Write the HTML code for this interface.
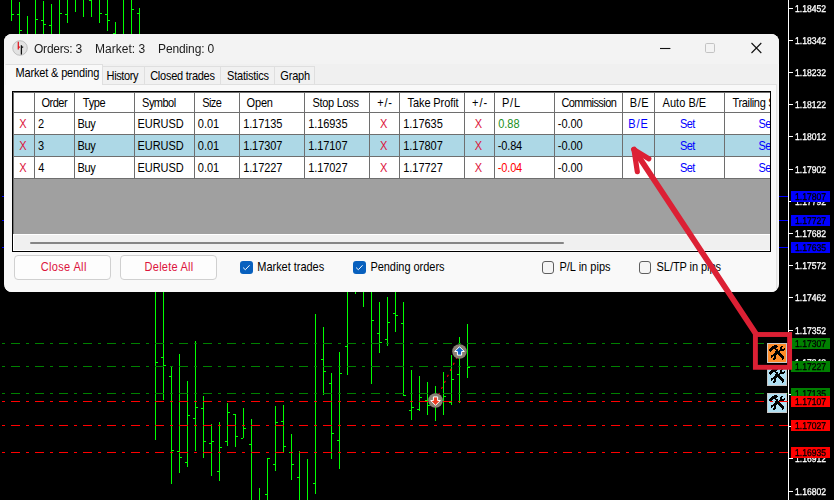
<!DOCTYPE html>
<html lang="en"><head><meta charset="utf-8"><title>Orders</title>
<style>
html,body{margin:0;padding:0;background:#000}
body{width:834px;height:500px;overflow:hidden;position:relative;font-family:"Liberation Sans",sans-serif}
.chart{position:absolute;left:0;top:0;display:block;will-change:transform}
.ax{text-rendering:geometricPrecision;font-family:"Liberation Sans",sans-serif;font-size:9.8px;stroke-width:0.3px}
.anno{position:absolute;left:0;top:0;pointer-events:none}
#dlg{position:absolute;left:4px;top:34px;width:775px;height:257.5px;background:#f0f0f0;border-radius:8px;overflow:hidden;box-shadow:inset 0 0 0 1px rgba(255,255,255,.55)}
#tbar{position:absolute;left:0;top:0;width:775px;height:30px;background:#f3f3f3}
#page{position:absolute;left:1px;top:50px;width:771px;height:208px;background:#f9f9f9;border-right:1px solid #e2e2e2;border-top:1px solid #e0e0e0}
.tab{position:absolute;top:32px;height:17px;background:#f1f1f1;border:1px solid #dfdfdf;border-bottom:none;box-sizing:content-box}
.tab.on{top:30px;height:20px;background:#f9f9f9;border-left-color:#f4f4f4}
#grid{position:absolute;left:8px;top:57px;width:757px;height:159px;border:1px solid #000;background:#a0a0a0;overflow:hidden}
#grid .in{position:absolute;left:0;top:0;right:0;bottom:0;border-left:1px solid #6e6e6e;border-top:1px solid #6e6e6e}
.hc{position:absolute;top:1px;height:19px;background:#fff}
.c{position:absolute;height:21px;background:#fff}
.row.sel .c{background:#add8e6}
.t{position:absolute;white-space:pre;font-size:12px;line-height:14px;font-family:"Liberation Sans",sans-serif}
.t.s{font-size:11px;transform:scaleY(1.125);transform-origin:0 11px}
.t.g{will-change:transform}
.vl{position:absolute;top:1px;width:1px;height:86px;background:#6e6e6e}
.hl{position:absolute;left:1px;width:757px;height:1px;background:#6e6e6e}
#sb{position:absolute;left:0;right:0;top:142px;height:17px;background:#f0f0f0;border:1px solid #fff;border-right:none;box-sizing:border-box}
#thumb{position:absolute;left:16px;top:7px;width:534px;height:2px;background:#858585;border-radius:1px}
.btn{position:absolute;top:221px;height:23px;width:95px;border:1px solid #d0d0d0;border-radius:4px;background:#fdfdfd}
.chk{position:absolute;top:224px;height:20px;width:120px}
.cb{position:absolute;left:0;top:3px;width:12.6px;height:12.6px;border-radius:3px;box-sizing:border-box}
.cb.on{background:#0860be}
.cb.off{background:#f5f5f5;border:1px solid #5f5f5f}
</style></head>
<body>
<svg class="chart" width="834" height="500" viewBox="0 0 834 500">
<rect width="834" height="500" fill="#000"/>
<g fill="#00ff00" shape-rendering="crispEdges"><rect x="11" y="0" width="1" height="21"/><rect x="12" y="14" width="2" height="1"/><rect x="19" y="2" width="1" height="38"/><rect x="17" y="14" width="2" height="1"/><rect x="20" y="30" width="2" height="1"/><rect x="27" y="16" width="1" height="24"/><rect x="35" y="0" width="1" height="40"/><rect x="36" y="19" width="2" height="1"/><rect x="43" y="1" width="1" height="39"/><rect x="41" y="20" width="2" height="1"/><rect x="44" y="24" width="2" height="1"/><rect x="51" y="4" width="1" height="36"/><rect x="49" y="25" width="2" height="1"/><rect x="59" y="0" width="1" height="40"/><rect x="60" y="13" width="2" height="1"/><rect x="67" y="0" width="1" height="23"/><rect x="65" y="14" width="2" height="1"/><rect x="75" y="0" width="1" height="12"/><rect x="83" y="0" width="1" height="17"/><rect x="91" y="0" width="1" height="17"/><rect x="89" y="0" width="2" height="1"/><rect x="99" y="0" width="1" height="23"/><rect x="100" y="13" width="2" height="1"/><rect x="107" y="0" width="1" height="31"/><rect x="105" y="14" width="2" height="1"/><rect x="108" y="20" width="2" height="1"/><rect x="115" y="22" width="1" height="18"/><rect x="113" y="33" width="2" height="1"/><rect x="123" y="0" width="1" height="40"/><rect x="131" y="0" width="1" height="40"/><rect x="132" y="9" width="2" height="1"/><rect x="139" y="8" width="1" height="32"/><rect x="137" y="13" width="2" height="1"/><rect x="155" y="280" width="1" height="160"/><rect x="156" y="362" width="2" height="1"/><rect x="163" y="280" width="1" height="120"/><rect x="161" y="357" width="2" height="1"/><rect x="164" y="365" width="2" height="1"/><rect x="171" y="366" width="1" height="118"/><rect x="169" y="376" width="2" height="1"/><rect x="172" y="450" width="2" height="1"/><rect x="179" y="354" width="1" height="119"/><rect x="177" y="451" width="2" height="1"/><rect x="180" y="457" width="2" height="1"/><rect x="187" y="381" width="1" height="86"/><rect x="185" y="462" width="2" height="1"/><rect x="188" y="415" width="2" height="1"/><rect x="195" y="341" width="1" height="110"/><rect x="193" y="418" width="2" height="1"/><rect x="196" y="407" width="2" height="1"/><rect x="203" y="396" width="1" height="62"/><rect x="201" y="408" width="2" height="1"/><rect x="204" y="441" width="2" height="1"/><rect x="211" y="424" width="1" height="52"/><rect x="209" y="443" width="2" height="1"/><rect x="212" y="441" width="2" height="1"/><rect x="219" y="422" width="1" height="59"/><rect x="217" y="471" width="2" height="1"/><rect x="220" y="447" width="2" height="1"/><rect x="227" y="403" width="1" height="43"/><rect x="225" y="441" width="2" height="1"/><rect x="228" y="412" width="2" height="1"/><rect x="235" y="414" width="1" height="33"/><rect x="233" y="414" width="2" height="1"/><rect x="236" y="436" width="2" height="1"/><rect x="243" y="408" width="1" height="30"/><rect x="241" y="438" width="2" height="1"/><rect x="244" y="428" width="2" height="1"/><rect x="251" y="419" width="1" height="81"/><rect x="249" y="444" width="2" height="1"/><rect x="259" y="488" width="1" height="12"/><rect x="267" y="458" width="1" height="42"/><rect x="265" y="494" width="2" height="1"/><rect x="268" y="458" width="2" height="1"/><rect x="275" y="406" width="1" height="65"/><rect x="273" y="464" width="2" height="1"/><rect x="276" y="422" width="2" height="1"/><rect x="283" y="405" width="1" height="47"/><rect x="281" y="421" width="2" height="1"/><rect x="284" y="446" width="2" height="1"/><rect x="291" y="434" width="1" height="46"/><rect x="289" y="452" width="2" height="1"/><rect x="292" y="464" width="2" height="1"/><rect x="299" y="451" width="1" height="49"/><rect x="297" y="477" width="2" height="1"/><rect x="307" y="459" width="1" height="41"/><rect x="315" y="314" width="1" height="180"/><rect x="313" y="483" width="2" height="1"/><rect x="323" y="327" width="1" height="68"/><rect x="321" y="359" width="2" height="1"/><rect x="324" y="371" width="2" height="1"/><rect x="331" y="373" width="1" height="86"/><rect x="329" y="383" width="2" height="1"/><rect x="332" y="433" width="2" height="1"/><rect x="339" y="352" width="1" height="117"/><rect x="337" y="440" width="2" height="1"/><rect x="340" y="373" width="2" height="1"/><rect x="347" y="280" width="1" height="95"/><rect x="345" y="346" width="2" height="1"/><rect x="355" y="280" width="1" height="14"/><rect x="363" y="280" width="1" height="27"/><rect x="371" y="280" width="1" height="104"/><rect x="372" y="320" width="2" height="1"/><rect x="379" y="302" width="1" height="51"/><rect x="377" y="333" width="2" height="1"/><rect x="380" y="342" width="2" height="1"/><rect x="387" y="297" width="1" height="49"/><rect x="385" y="339" width="2" height="1"/><rect x="388" y="322" width="2" height="1"/><rect x="395" y="280" width="1" height="52"/><rect x="393" y="313" width="2" height="1"/><rect x="396" y="315" width="2" height="1"/><rect x="403" y="302" width="1" height="94"/><rect x="401" y="323" width="2" height="1"/><rect x="404" y="395" width="2" height="1"/><rect x="411" y="370" width="1" height="50"/><rect x="409" y="410" width="2" height="1"/><rect x="412" y="407" width="2" height="1"/><rect x="419" y="376" width="1" height="35"/><rect x="417" y="409" width="2" height="1"/><rect x="420" y="397" width="2" height="1"/><rect x="427" y="382" width="1" height="33"/><rect x="425" y="400" width="2" height="1"/><rect x="428" y="405" width="2" height="1"/><rect x="435" y="386" width="1" height="35"/><rect x="443" y="372" width="1" height="43"/><rect x="444" y="396" width="2" height="1"/><rect x="451" y="355" width="1" height="50"/><rect x="449" y="402" width="2" height="1"/><rect x="452" y="379" width="2" height="1"/><rect x="459" y="337" width="1" height="66"/><rect x="457" y="374" width="2" height="1"/><rect x="467" y="324" width="1" height="54"/><rect x="468" y="367" width="2" height="1"/></g>
<line x1="0" y1="196.5" x2="789" y2="196.5" stroke="#0000ff" stroke-width="1" stroke-dasharray="9 6 3 6" stroke-dashoffset="13" shape-rendering="crispEdges"/><line x1="0" y1="220.5" x2="789" y2="220.5" stroke="#0000ff" stroke-width="1" stroke-dasharray="9 6 3 6" stroke-dashoffset="13" shape-rendering="crispEdges"/><line x1="0" y1="247.5" x2="789" y2="247.5" stroke="#0000ff" stroke-width="1" stroke-dasharray="9 6 3 6" stroke-dashoffset="13" shape-rendering="crispEdges"/>
<line x1="0" y1="343.5" x2="789" y2="343.5" stroke="#008000" stroke-width="1" stroke-dasharray="9 6 3 6" stroke-dashoffset="13" shape-rendering="crispEdges"/><line x1="0" y1="366.5" x2="789" y2="366.5" stroke="#008000" stroke-width="1" stroke-dasharray="9 6 3 6" stroke-dashoffset="13" shape-rendering="crispEdges"/><line x1="0" y1="393.5" x2="789" y2="393.5" stroke="#008000" stroke-width="1" stroke-dasharray="9 6 3 6" stroke-dashoffset="13" shape-rendering="crispEdges"/>
<line x1="436" y1="400" x2="459.5" y2="352" stroke="#ff0000" stroke-width="1.1" stroke-dasharray="2.2 4.5" stroke-dashoffset="1"/>
<g transform="translate(767,343)" shape-rendering="crispEdges"><rect x="0" y="0" width="20" height="20" fill="#c8c8c8"/><rect x="1" y="1" width="18" height="18" fill="#ff8c28"/><path d="M7 2h3v1h-3zM5 3h6v1h-6zM14 3h2v1h-2zM4 4h6v1h-6zM13 4h2v1h-2zM3 5h6v1h-6zM13 5h2v1h-2zM17 5h1v1h-1zM2 6h4v1h-4zM8 6h3v1h-3zM13 6h5v1h-5zM2 7h3v1h-3zM9 7h2v1h-2zM12 7h5v1h-5zM3 8h1v1h-1zM8 8h5v1h-5zM8 9h5v1h-5zM7 10h7v1h-7zM6 11h4v1h-4zM11 11h4v1h-4zM4 12h5v1h-5zM12 12h4v1h-4zM4 13h2v1h-2zM7 13h2v1h-2zM13 13h4v1h-4zM4 14h1v1h-1zM7 14h2v1h-2zM14 14h3v1h-3zM6 15h3v1h-3zM15 15h2v1h-2zM6 16h2v1h-2zM15 16h1v1h-1z" fill="#000"/></g><g transform="translate(767,366)" shape-rendering="crispEdges"><rect x="0" y="0" width="20" height="20" fill="#c8c8c8"/><rect x="1" y="1" width="18" height="18" fill="#b0dff2"/><path d="M7 2h3v1h-3zM5 3h6v1h-6zM14 3h2v1h-2zM4 4h6v1h-6zM13 4h2v1h-2zM3 5h6v1h-6zM13 5h2v1h-2zM17 5h1v1h-1zM2 6h4v1h-4zM8 6h3v1h-3zM13 6h5v1h-5zM2 7h3v1h-3zM9 7h2v1h-2zM12 7h5v1h-5zM3 8h1v1h-1zM8 8h5v1h-5zM8 9h5v1h-5zM7 10h7v1h-7zM6 11h4v1h-4zM11 11h4v1h-4zM4 12h5v1h-5zM12 12h4v1h-4zM4 13h2v1h-2zM7 13h2v1h-2zM13 13h4v1h-4zM4 14h1v1h-1zM7 14h2v1h-2zM14 14h3v1h-3zM6 15h3v1h-3zM15 15h2v1h-2zM6 16h2v1h-2zM15 16h1v1h-1z" fill="#000"/></g><g transform="translate(767,393)" shape-rendering="crispEdges"><rect x="0" y="0" width="20" height="20" fill="#c8c8c8"/><rect x="1" y="1" width="18" height="18" fill="#b0dff2"/><path d="M7 2h3v1h-3zM5 3h6v1h-6zM14 3h2v1h-2zM4 4h6v1h-6zM13 4h2v1h-2zM3 5h6v1h-6zM13 5h2v1h-2zM17 5h1v1h-1zM2 6h4v1h-4zM8 6h3v1h-3zM13 6h5v1h-5zM2 7h3v1h-3zM9 7h2v1h-2zM12 7h5v1h-5zM3 8h1v1h-1zM8 8h5v1h-5zM8 9h5v1h-5zM7 10h7v1h-7zM6 11h4v1h-4zM11 11h4v1h-4zM4 12h5v1h-5zM12 12h4v1h-4zM4 13h2v1h-2zM7 13h2v1h-2zM13 13h4v1h-4zM4 14h1v1h-1zM7 14h2v1h-2zM14 14h3v1h-3zM6 15h3v1h-3zM15 15h2v1h-2zM6 16h2v1h-2zM15 16h1v1h-1z" fill="#000"/></g>
<line x1="0" y1="401.5" x2="789" y2="401.5" stroke="#ff0000" stroke-width="1" stroke-dasharray="9 6 3 6" stroke-dashoffset="13" shape-rendering="crispEdges"/><line x1="0" y1="425.5" x2="789" y2="425.5" stroke="#ff0000" stroke-width="1" stroke-dasharray="9 6 3 6" stroke-dashoffset="13" shape-rendering="crispEdges"/><line x1="0" y1="452.5" x2="789" y2="452.5" stroke="#ff0000" stroke-width="1" stroke-dasharray="9 6 3 6" stroke-dashoffset="13" shape-rendering="crispEdges"/>
<g transform="translate(459.5,351.5)"><circle r="7.3" fill="#8a7f74"/><path d="M0 -4.8 L4.8 0 L2.1 0 L2.1 3.6 L-2.1 3.6 L-2.1 0 L-4.8 0 Z" fill="#1464c8" stroke="#fff" stroke-width="1" stroke-linejoin="miter"/></g><g transform="translate(435.5,400.5)"><circle r="7.3" fill="#8a7f74"/><path d="M0 -4.8 L4.8 0 L2.1 0 L2.1 3.6 L-2.1 3.6 L-2.1 0 L-4.8 0 Z" transform="scale(1,-1)" fill="#f03a1e" stroke="#fff" stroke-width="1" stroke-linejoin="miter"/></g>
<rect x="788" y="0" width="1" height="500" fill="#fff" shape-rendering="crispEdges"/><rect x="789" y="8" width="4" height="1" fill="#fff" shape-rendering="crispEdges"/><text x="795" y="12" fill="#fff" stroke="#fff" class="ax" textLength="31" lengthAdjust="spacingAndGlyphs">1.18452</text><rect x="789" y="40" width="4" height="1" fill="#fff" shape-rendering="crispEdges"/><text x="795" y="44" fill="#fff" stroke="#fff" class="ax" textLength="31" lengthAdjust="spacingAndGlyphs">1.18342</text><rect x="789" y="72" width="4" height="1" fill="#fff" shape-rendering="crispEdges"/><text x="795" y="76" fill="#fff" stroke="#fff" class="ax" textLength="31" lengthAdjust="spacingAndGlyphs">1.18232</text><rect x="789" y="104" width="4" height="1" fill="#fff" shape-rendering="crispEdges"/><text x="795" y="108" fill="#fff" stroke="#fff" class="ax" textLength="31" lengthAdjust="spacingAndGlyphs">1.18122</text><rect x="789" y="136" width="4" height="1" fill="#fff" shape-rendering="crispEdges"/><text x="795" y="140" fill="#fff" stroke="#fff" class="ax" textLength="31" lengthAdjust="spacingAndGlyphs">1.18012</text><rect x="789" y="169" width="4" height="1" fill="#fff" shape-rendering="crispEdges"/><text x="795" y="173" fill="#fff" stroke="#fff" class="ax" textLength="31" lengthAdjust="spacingAndGlyphs">1.17902</text><rect x="789" y="201" width="4" height="1" fill="#fff" shape-rendering="crispEdges"/><text x="795" y="205" fill="#fff" stroke="#fff" class="ax" textLength="31" lengthAdjust="spacingAndGlyphs">1.17792</text><rect x="789" y="233" width="4" height="1" fill="#fff" shape-rendering="crispEdges"/><text x="795" y="237" fill="#fff" stroke="#fff" class="ax" textLength="31" lengthAdjust="spacingAndGlyphs">1.17682</text><rect x="789" y="265" width="4" height="1" fill="#fff" shape-rendering="crispEdges"/><text x="795" y="269" fill="#fff" stroke="#fff" class="ax" textLength="31" lengthAdjust="spacingAndGlyphs">1.17572</text><rect x="789" y="297" width="4" height="1" fill="#fff" shape-rendering="crispEdges"/><text x="795" y="301" fill="#fff" stroke="#fff" class="ax" textLength="31" lengthAdjust="spacingAndGlyphs">1.17462</text><rect x="789" y="330" width="4" height="1" fill="#fff" shape-rendering="crispEdges"/><text x="795" y="334" fill="#fff" stroke="#fff" class="ax" textLength="31" lengthAdjust="spacingAndGlyphs">1.17352</text><rect x="789" y="362" width="4" height="1" fill="#fff" shape-rendering="crispEdges"/><text x="795" y="366" fill="#fff" stroke="#fff" class="ax" textLength="31" lengthAdjust="spacingAndGlyphs">1.17242</text><rect x="789" y="394" width="4" height="1" fill="#fff" shape-rendering="crispEdges"/><text x="795" y="398" fill="#fff" stroke="#fff" class="ax" textLength="31" lengthAdjust="spacingAndGlyphs">1.17132</text><rect x="789" y="426" width="4" height="1" fill="#fff" shape-rendering="crispEdges"/><text x="795" y="430" fill="#fff" stroke="#fff" class="ax" textLength="31" lengthAdjust="spacingAndGlyphs">1.17022</text><rect x="789" y="458" width="4" height="1" fill="#fff" shape-rendering="crispEdges"/><text x="795" y="462" fill="#fff" stroke="#fff" class="ax" textLength="31" lengthAdjust="spacingAndGlyphs">1.16912</text><rect x="789" y="491" width="4" height="1" fill="#fff" shape-rendering="crispEdges"/><text x="795" y="495" fill="#fff" stroke="#fff" class="ax" textLength="31" lengthAdjust="spacingAndGlyphs">1.16802</text>
<rect x="791" y="191" width="39" height="11" fill="#0000ff" shape-rendering="crispEdges"/><text x="795" y="200" fill="#000" stroke="#000" class="ax" textLength="31" lengthAdjust="spacingAndGlyphs">1.17807</text><rect x="791" y="215" width="39" height="11" fill="#0000ff" shape-rendering="crispEdges"/><text x="795" y="224" fill="#000" stroke="#000" class="ax" textLength="31" lengthAdjust="spacingAndGlyphs">1.17727</text><rect x="791" y="242" width="39" height="11" fill="#0000ff" shape-rendering="crispEdges"/><text x="795" y="251" fill="#000" stroke="#000" class="ax" textLength="31" lengthAdjust="spacingAndGlyphs">1.17635</text>
<rect x="791" y="338" width="39" height="11" fill="#008000" shape-rendering="crispEdges"/><text x="795" y="347" fill="#000" stroke="#000" class="ax" textLength="31" lengthAdjust="spacingAndGlyphs">1.17307</text><rect x="791" y="361" width="39" height="11" fill="#008000" shape-rendering="crispEdges"/><text x="795" y="370" fill="#000" stroke="#000" class="ax" textLength="31" lengthAdjust="spacingAndGlyphs">1.17227</text><rect x="791" y="388" width="39" height="11" fill="#008000" shape-rendering="crispEdges"/><text x="795" y="397" fill="#000" stroke="#000" class="ax" textLength="31" lengthAdjust="spacingAndGlyphs">1.17135</text>
<rect x="791" y="396" width="39" height="11" fill="#ff0000" shape-rendering="crispEdges"/><text x="795" y="405" fill="#000" stroke="#000" class="ax" textLength="31" lengthAdjust="spacingAndGlyphs">1.17107</text><rect x="791" y="420" width="39" height="11" fill="#ff0000" shape-rendering="crispEdges"/><text x="795" y="429" fill="#000" stroke="#000" class="ax" textLength="31" lengthAdjust="spacingAndGlyphs">1.17027</text><rect x="791" y="447" width="39" height="11" fill="#ff0000" shape-rendering="crispEdges"/><text x="795" y="456" fill="#000" stroke="#000" class="ax" textLength="31" lengthAdjust="spacingAndGlyphs">1.16935</text>
</svg>
<div id="dlg">
<div id="tbar">
<svg style="position:absolute;left:8px;top:6px" width="17" height="17" viewBox="0 0 17 17"><circle cx="8" cy="8" r="7.3" fill="#e2e2e2" stroke="#b4b4b4" stroke-width="0.8"/><path d="M6.3 1.8 V9.4 M6.3 7.2 H8" stroke="#e01b24" stroke-width="1.3" fill="none"/><path d="M9.4 5.2 V14.4 M9.4 7.2 H11.2" stroke="#111" stroke-width="1.3" fill="none"/></svg>
<span class="t g" style="left:30.20px;top:8px;color:#1b1b1b;letter-spacing:-0.225px">Orders: 3</span><span class="t g" style="left:91.10px;top:8px;color:#1b1b1b;letter-spacing:0.013px">Market: 3</span><span class="t g" style="left:153.90px;top:8px;color:#1b1b1b;letter-spacing:-0.122px">Pending: 0</span>
<svg style="position:absolute;left:650px;top:5px" width="120" height="20" viewBox="0 0 120 20">
<path d="M6 9.5 H16.4" stroke="#111" stroke-width="1.1"/>
<rect x="51.5" y="4.5" width="9" height="9" rx="1.2" fill="none" stroke="#c3c3c3" stroke-width="1"/>
<path d="M97.5 4 L107.3 14 M107.3 4 L97.5 14" stroke="#111" stroke-width="1.1" fill="none"/>
</svg>
</div>
<div id="page"></div>
<div class="tab on" style="left:1px;width:96px"><span class="t s" style="left:9.60px;top:1px;color:#000;letter-spacing:-0.167px">Market &amp; pending</span></div><div class="tab" style="left:98px;width:41px"><span class="t s" style="left:3.60px;top:2px;color:#000;letter-spacing:-0.375px">History</span></div><div class="tab" style="left:140px;width:75px"><span class="t s" style="left:5.20px;top:2px;color:#000;letter-spacing:-0.258px">Closed trades</span></div><div class="tab" style="left:216px;width:53px"><span class="t s" style="left:6.10px;top:2px;color:#000;letter-spacing:-0.239px">Statistics</span></div><div class="tab" style="left:270px;width:39px"><span class="t s" style="left:5.30px;top:2px;color:#000;letter-spacing:-0.175px">Graph</span></div>
<div id="grid"><div class="in"></div><div class="hrow"><div class="hc" style="left:1px;width:20px"></div><div class="hc" style="left:22px;width:39px"><span class="t s" style="left:6.40px;top:3px;color:#000;letter-spacing:-0.475px">Order</span></div><div class="hc" style="left:62px;width:59px"><span class="t s" style="left:7.85px;top:3px;color:#000;letter-spacing:-0.317px">Type</span></div><div class="hc" style="left:122px;width:59px"><span class="t s" style="left:7.10px;top:3px;color:#000;letter-spacing:-0.540px">Symbol</span></div><div class="hc" style="left:182px;width:44px"><span class="t s" style="left:7.20px;top:3px;color:#000;letter-spacing:-0.600px">Size</span></div><div class="hc" style="left:227px;width:64px"><span class="t s" style="left:6.60px;top:3px;color:#000;letter-spacing:-0.183px">Open</span></div><div class="hc" style="left:292px;width:64px"><span class="t s" style="left:7.50px;top:3px;color:#000;letter-spacing:-0.300px">Stop Loss</span></div><div class="hc" style="left:357px;width:29px"><span class="t s" style="left:7.30px;top:3px;color:#000;letter-spacing:0.725px">+/-</span></div><div class="hc" style="left:387px;width:64px"><span class="t s" style="left:7.55px;top:3px;color:#000;letter-spacing:-0.095px">Take Profit</span></div><div class="hc" style="left:452px;width:29px"><span class="t s" style="left:7.00px;top:3px;color:#000;letter-spacing:0.975px">+/-</span></div><div class="hc" style="left:482px;width:59px"><span class="t s" style="left:7.00px;top:3px;color:#000;letter-spacing:0.775px">P/L</span></div><div class="hc" style="left:542px;width:67px"><span class="t s" style="left:6.40px;top:3px;color:#000;letter-spacing:-0.561px">Commission</span></div><div class="hc" style="left:610px;width:31px"><span class="t s" style="left:6.80px;top:3px;color:#000;letter-spacing:0.575px">B/E</span></div><div class="hc" style="left:642px;width:69px"><span class="t s" style="left:7.60px;top:3px;color:#000;letter-spacing:0.029px">Auto B/E</span></div><div class="hc" style="left:712px;width:86px"><span class="t s" style="left:7.45px;top:3px;color:#000;letter-spacing:-0.336px">Trailing Stop</span></div></div><div class="row"><div class="c" style="left:1px;top:21px;width:20px"><span class="t s" style="left:5.35px;top:4px;color:#dc143c;letter-spacing:0.000px">X</span></div><div class="c" style="left:22px;top:21px;width:39px"><span class="t s" style="left:3.00px;top:4px;color:#000;letter-spacing:0.000px">2</span></div><div class="c" style="left:62px;top:21px;width:59px"><span class="t s" style="left:2.60px;top:4px;color:#000;letter-spacing:-0.400px">Buy</span></div><div class="c" style="left:122px;top:21px;width:59px"><span class="t s" style="left:2.50px;top:4px;color:#000;letter-spacing:-0.040px">EURUSD</span></div><div class="c" style="left:182px;top:21px;width:44px"><span class="t s" style="left:2.80px;top:4px;color:#000;letter-spacing:0.000px">0.01</span></div><div class="c" style="left:227px;top:21px;width:64px"><span class="t s" style="left:3.15px;top:4px;color:#000;letter-spacing:-0.100px">1.17135</span></div><div class="c" style="left:292px;top:21px;width:64px"><span class="t s" style="left:3.15px;top:4px;color:#000;letter-spacing:-0.067px">1.16935</span></div><div class="c" style="left:357px;top:21px;width:29px"><span class="t s" style="left:10.05px;top:4px;color:#dc143c;letter-spacing:0.000px">X</span></div><div class="c" style="left:387px;top:21px;width:64px"><span class="t s" style="left:3.15px;top:4px;color:#000;letter-spacing:-0.017px">1.17635</span></div><div class="c" style="left:452px;top:21px;width:29px"><span class="t s" style="left:9.65px;top:4px;color:#dc143c;letter-spacing:0.000px">X</span></div><div class="c" style="left:482px;top:21px;width:59px"><span class="t s" style="left:3.20px;top:4px;color:#229022;letter-spacing:0.000px">0.88</span></div><div class="c" style="left:542px;top:21px;width:67px"><span class="t s" style="left:2.80px;top:4px;color:#000;letter-spacing:-0.062px">-0.00</span></div><div class="c" style="left:610px;top:21px;width:31px"><span class="t s" style="left:5.30px;top:4px;color:#0000ff;letter-spacing:0.875px">B/E</span></div><div class="c" style="left:642px;top:21px;width:69px"><span class="t s" style="left:25.10px;top:4px;color:#0000ff;letter-spacing:-0.650px">Set</span></div><div class="c" style="left:712px;top:21px;width:86px"><span class="t s" style="left:33.60px;top:4px;color:#0000ff;letter-spacing:-0.650px">Set</span></div></div><div class="row sel"><div class="c" style="left:1px;top:43px;width:20px"><span class="t s" style="left:5.35px;top:4px;color:#dc143c;letter-spacing:0.000px">X</span></div><div class="c" style="left:22px;top:43px;width:39px"><span class="t s" style="left:3.00px;top:4px;color:#000;letter-spacing:0.000px">3</span></div><div class="c" style="left:62px;top:43px;width:59px"><span class="t s" style="left:2.60px;top:4px;color:#000;letter-spacing:-0.400px">Buy</span></div><div class="c" style="left:122px;top:43px;width:59px"><span class="t s" style="left:2.50px;top:4px;color:#000;letter-spacing:-0.040px">EURUSD</span></div><div class="c" style="left:182px;top:43px;width:44px"><span class="t s" style="left:2.80px;top:4px;color:#000;letter-spacing:0.000px">0.01</span></div><div class="c" style="left:227px;top:43px;width:64px"><span class="t s" style="left:3.15px;top:4px;color:#000;letter-spacing:-0.100px">1.17307</span></div><div class="c" style="left:292px;top:43px;width:64px"><span class="t s" style="left:3.15px;top:4px;color:#000;letter-spacing:-0.067px">1.17107</span></div><div class="c" style="left:357px;top:43px;width:29px"><span class="t s" style="left:10.05px;top:4px;color:#dc143c;letter-spacing:0.000px">X</span></div><div class="c" style="left:387px;top:43px;width:64px"><span class="t s" style="left:3.15px;top:4px;color:#000;letter-spacing:-0.017px">1.17807</span></div><div class="c" style="left:452px;top:43px;width:29px"><span class="t s" style="left:9.65px;top:4px;color:#dc143c;letter-spacing:0.000px">X</span></div><div class="c" style="left:482px;top:43px;width:59px"><span class="t s" style="left:2.80px;top:4px;color:#000;letter-spacing:-0.162px">-0.84</span></div><div class="c" style="left:542px;top:43px;width:67px"><span class="t s" style="left:2.80px;top:4px;color:#000;letter-spacing:-0.062px">-0.00</span></div><div class="c" style="left:610px;top:43px;width:31px"></div><div class="c" style="left:642px;top:43px;width:69px"><span class="t s" style="left:25.10px;top:4px;color:#0000ff;letter-spacing:-0.650px">Set</span></div><div class="c" style="left:712px;top:43px;width:86px"><span class="t s" style="left:33.60px;top:4px;color:#0000ff;letter-spacing:-0.650px">Set</span></div></div><div class="row"><div class="c" style="left:1px;top:65px;width:20px"><span class="t s" style="left:5.35px;top:4px;color:#dc143c;letter-spacing:0.000px">X</span></div><div class="c" style="left:22px;top:65px;width:39px"><span class="t s" style="left:3.25px;top:4px;color:#000;letter-spacing:0.000px">4</span></div><div class="c" style="left:62px;top:65px;width:59px"><span class="t s" style="left:2.60px;top:4px;color:#000;letter-spacing:-0.400px">Buy</span></div><div class="c" style="left:122px;top:65px;width:59px"><span class="t s" style="left:2.50px;top:4px;color:#000;letter-spacing:-0.040px">EURUSD</span></div><div class="c" style="left:182px;top:65px;width:44px"><span class="t s" style="left:2.80px;top:4px;color:#000;letter-spacing:0.000px">0.01</span></div><div class="c" style="left:227px;top:65px;width:64px"><span class="t s" style="left:3.15px;top:4px;color:#000;letter-spacing:-0.100px">1.17227</span></div><div class="c" style="left:292px;top:65px;width:64px"><span class="t s" style="left:3.15px;top:4px;color:#000;letter-spacing:-0.067px">1.17027</span></div><div class="c" style="left:357px;top:65px;width:29px"><span class="t s" style="left:10.05px;top:4px;color:#dc143c;letter-spacing:0.000px">X</span></div><div class="c" style="left:387px;top:65px;width:64px"><span class="t s" style="left:3.15px;top:4px;color:#000;letter-spacing:-0.017px">1.17727</span></div><div class="c" style="left:452px;top:65px;width:29px"><span class="t s" style="left:9.65px;top:4px;color:#dc143c;letter-spacing:0.000px">X</span></div><div class="c" style="left:482px;top:65px;width:59px"><span class="t s" style="left:2.80px;top:4px;color:#ff0000;letter-spacing:-0.162px">-0.04</span></div><div class="c" style="left:542px;top:65px;width:67px"><span class="t s" style="left:2.80px;top:4px;color:#000;letter-spacing:-0.062px">-0.00</span></div><div class="c" style="left:610px;top:65px;width:31px"></div><div class="c" style="left:642px;top:65px;width:69px"><span class="t s" style="left:25.10px;top:4px;color:#0000ff;letter-spacing:-0.650px">Set</span></div><div class="c" style="left:712px;top:65px;width:86px"><span class="t s" style="left:33.60px;top:4px;color:#0000ff;letter-spacing:-0.650px">Set</span></div></div><div class="vl" style="left:21px"></div><div class="vl" style="left:61px"></div><div class="vl" style="left:121px"></div><div class="vl" style="left:181px"></div><div class="vl" style="left:226px"></div><div class="vl" style="left:291px"></div><div class="vl" style="left:356px"></div><div class="vl" style="left:386px"></div><div class="vl" style="left:451px"></div><div class="vl" style="left:481px"></div><div class="vl" style="left:541px"></div><div class="vl" style="left:609px"></div><div class="vl" style="left:641px"></div><div class="vl" style="left:711px"></div><div class="hl" style="top:20px"></div><div class="hl" style="top:42px"></div><div class="hl" style="top:64px"></div><div class="hl" style="top:86px"></div><div id="sb"><div id="thumb"></div></div></div>
<div class="btn" style="left:10px"><span class="t s" style="left:25.70px;top:4px;color:#dc143c;letter-spacing:0.356px">Close All</span></div>
<div class="btn" style="left:116px"><span class="t s" style="left:23.60px;top:4px;color:#dc143c;letter-spacing:0.239px">Delete All</span></div>
<label class="chk" style="left:236px"><span class="cb on"><svg width="12.6" height="12.6" viewBox="0 0 13 13" style="display:block"><path d="M3.2 6.8 L5.5 9 L9.9 4.4" stroke="#fff" stroke-width="1" fill="none"/></svg></span><span class="t s" style="left:17.30px;top:2px;color:#000;letter-spacing:-0.033px">Market trades</span></label><label class="chk" style="left:349px"><span class="cb on"><svg width="12.6" height="12.6" viewBox="0 0 13 13" style="display:block"><path d="M3.2 6.8 L5.5 9 L9.9 4.4" stroke="#fff" stroke-width="1" fill="none"/></svg></span><span class="t s" style="left:17.40px;top:2px;color:#000;letter-spacing:-0.035px">Pending orders</span></label><label class="chk" style="left:537.8px"><span class="cb off"></span><span class="t s" style="left:17.60px;top:2px;color:#000;letter-spacing:0.020px">P/L in pips</span></label><label class="chk" style="left:634.8px"><span class="cb off"></span><span class="t s" style="left:17.80px;top:2px;color:#000;letter-spacing:-0.067px">SL/TP in pips</span></label>
</div>
<svg class="anno" width="834" height="500" viewBox="0 0 834 500">
<rect x="755.4" y="334.5" width="34.2" height="32.8" fill="none" stroke="#dc2034" stroke-width="4.9"/>
<path d="M756 334 L634 149.5" stroke="#dc2034" stroke-width="5.8" stroke-linecap="round" fill="none"/>
<path d="M648.8 158.8 L634 149.7 L637.3 171.6" stroke="#dc2034" stroke-width="5.2" stroke-linecap="round" stroke-linejoin="round" fill="none"/>
</svg>
</body></html>
